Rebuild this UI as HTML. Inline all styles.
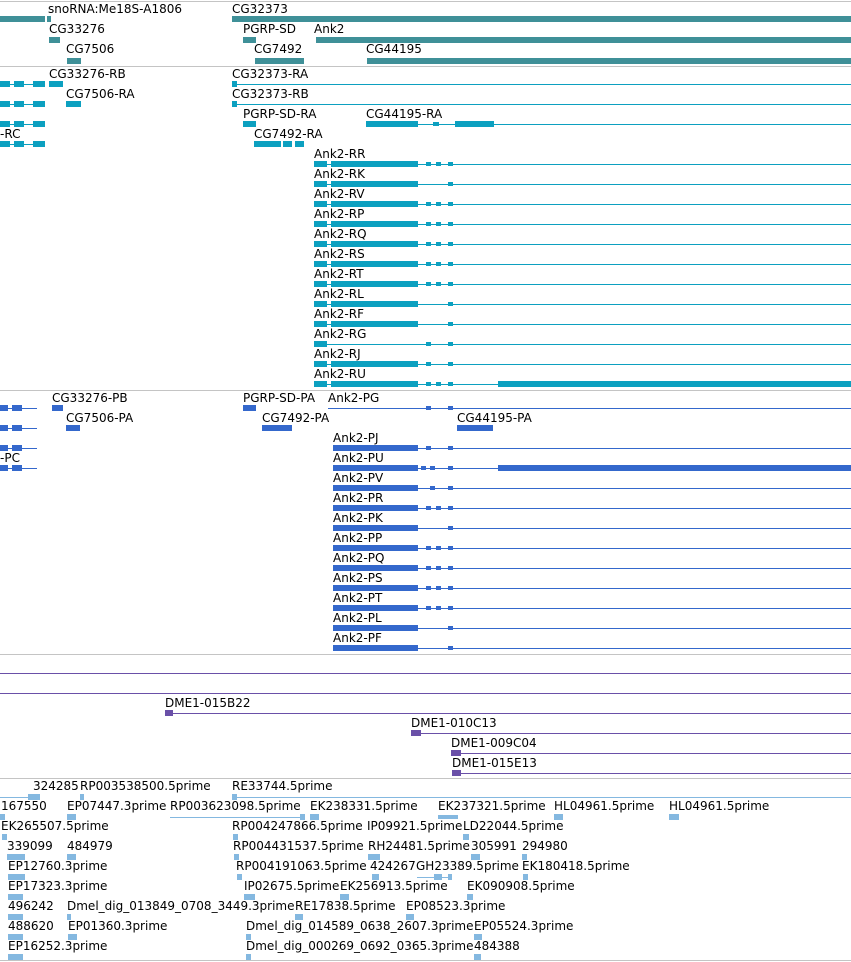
<!DOCTYPE html>
<html><head><meta charset="utf-8"><style>
body{margin:0;width:851px;height:962px;background:#fff;position:relative;overflow:hidden}
.t{position:absolute;font:12px "DejaVu Sans",sans-serif;line-height:14px;white-space:nowrap;color:#000}
.b{position:absolute;height:6px}
.s{position:absolute;height:4px}
.l{position:absolute;height:1px}
.h{position:absolute;left:0;width:851px;height:1px;background:#c4c4c4}
.g{background:#3f9098}.r{background:#0ca0c0}.p{background:#3468cc}.v{background:#6a50a8}.e{background:#84b8e0}
</style></head><body>
<div class="h" style="top:1px"></div>
<div class="h" style="top:66px"></div>
<div class="h" style="top:390px"></div>
<div class="h" style="top:654px"></div>
<div class="h" style="top:778px"></div>
<div class="h" style="top:960px"></div>

<!-- genes -->
<div class="t" style="left:48px;top:2px">snoRNA:Me18S-A1806</div>
<div class="t" style="left:232px;top:2px">CG32373</div>
<div class="b g" style="left:0;top:16px;width:45px"></div>
<div class="b g" style="left:47px;top:16px;width:4px"></div>
<div class="b g" style="left:232px;top:16px;width:619px"></div>
<div class="t" style="left:49px;top:22px">CG33276</div>
<div class="t" style="left:243px;top:22px">PGRP-SD</div>
<div class="t" style="left:314px;top:22px">Ank2</div>
<div class="b g" style="left:49px;top:37px;width:11px"></div>
<div class="b g" style="left:243px;top:37px;width:13px"></div>
<div class="b g" style="left:316px;top:37px;width:535px"></div>
<div class="t" style="left:66px;top:42px">CG7506</div>
<div class="t" style="left:254px;top:42px">CG7492</div>
<div class="t" style="left:366px;top:42px">CG44195</div>
<div class="b g" style="left:67px;top:58px;width:14px"></div>
<div class="b g" style="left:255px;top:58px;width:49px"></div>
<div class="b g" style="left:367px;top:58px;width:484px"></div>

<!-- transcripts -->
<div class="t" style="left:49px;top:67px">CG33276-RB</div>
<div class="t" style="left:232px;top:67px">CG32373-RA</div>
<div class="l r" style="left:0;top:84px;width:45px"></div>
<div class="b r" style="left:0;top:81px;width:10px"></div><div class="b r" style="left:14px;top:81px;width:10px"></div><div class="b r" style="left:33px;top:81px;width:12px"></div>
<div class="b r" style="left:49px;top:81px;width:14px"></div>
<div class="l r" style="left:232px;top:84px;width:619px"></div><div class="b r" style="left:232px;top:81px;width:5px"></div>

<div class="t" style="left:66px;top:87px">CG7506-RA</div>
<div class="t" style="left:232px;top:87px">CG32373-RB</div>
<div class="l r" style="left:0;top:104px;width:45px"></div>
<div class="b r" style="left:0;top:101px;width:10px"></div><div class="b r" style="left:14px;top:101px;width:10px"></div><div class="b r" style="left:33px;top:101px;width:12px"></div>
<div class="b r" style="left:66px;top:101px;width:15px"></div>
<div class="l r" style="left:232px;top:104px;width:619px"></div><div class="b r" style="left:232px;top:101px;width:5px"></div>

<div class="t" style="left:243px;top:107px">PGRP-SD-RA</div>
<div class="t" style="left:366px;top:107px">CG44195-RA</div>
<div class="l r" style="left:0;top:124px;width:45px"></div>
<div class="b r" style="left:0;top:121px;width:10px"></div><div class="b r" style="left:14px;top:121px;width:10px"></div><div class="b r" style="left:33px;top:121px;width:12px"></div>
<div class="b r" style="left:243px;top:121px;width:13px"></div>
<div class="b r" style="left:366px;top:121px;width:52px"></div>
<div class="l r" style="left:418px;top:124px;width:433px"></div>
<div class="s r" style="left:433px;top:122px;width:6px"></div>
<div class="b r" style="left:455px;top:121px;width:39px"></div>

<div class="t" style="left:0;top:127px">-RC</div>
<div class="t" style="left:254px;top:127px">CG7492-RA</div>
<div class="l r" style="left:0;top:144px;width:45px"></div>
<div class="b r" style="left:0;top:141px;width:10px"></div><div class="b r" style="left:14px;top:141px;width:10px"></div><div class="b r" style="left:33px;top:141px;width:12px"></div>
<div class="b r" style="left:254px;top:141px;width:27px"></div><div class="b r" style="left:283px;top:141px;width:9px"></div><div class="b r" style="left:295px;top:141px;width:9px"></div>

<div class="t" style="left:314px;top:147px">Ank2-RR</div>
<div class="t" style="left:314px;top:167px">Ank2-RK</div>
<div class="t" style="left:314px;top:187px">Ank2-RV</div>
<div class="t" style="left:314px;top:207px">Ank2-RP</div>
<div class="t" style="left:314px;top:227px">Ank2-RQ</div>
<div class="t" style="left:314px;top:247px">Ank2-RS</div>
<div class="t" style="left:314px;top:267px">Ank2-RT</div>
<div class="t" style="left:314px;top:287px">Ank2-RL</div>
<div class="t" style="left:314px;top:307px">Ank2-RF</div>
<div class="t" style="left:314px;top:327px">Ank2-RG</div>
<div class="t" style="left:314px;top:347px">Ank2-RJ</div>
<div class="t" style="left:314px;top:367px">Ank2-RU</div>

<div class="l r" style="left:314px;top:164px;width:537px"></div><div class="b r" style="left:314px;top:161px;width:13px"></div><div class="b r" style="left:331px;top:161px;width:87px"></div><div class="s r" style="left:426px;top:162px;width:5px"></div><div class="s r" style="left:436px;top:162px;width:5px"></div><div class="s r" style="left:448px;top:162px;width:5px"></div>
<div class="l r" style="left:314px;top:184px;width:537px"></div><div class="b r" style="left:314px;top:181px;width:13px"></div><div class="b r" style="left:331px;top:181px;width:87px"></div><div class="s r" style="left:448px;top:182px;width:5px"></div>
<div class="l r" style="left:314px;top:204px;width:537px"></div><div class="b r" style="left:314px;top:201px;width:13px"></div><div class="b r" style="left:331px;top:201px;width:87px"></div><div class="s r" style="left:426px;top:202px;width:5px"></div><div class="s r" style="left:436px;top:202px;width:5px"></div><div class="s r" style="left:448px;top:202px;width:5px"></div>
<div class="l r" style="left:314px;top:224px;width:537px"></div><div class="b r" style="left:314px;top:221px;width:13px"></div><div class="b r" style="left:331px;top:221px;width:87px"></div><div class="s r" style="left:426px;top:222px;width:5px"></div><div class="s r" style="left:436px;top:222px;width:5px"></div><div class="s r" style="left:448px;top:222px;width:5px"></div>
<div class="l r" style="left:314px;top:244px;width:537px"></div><div class="b r" style="left:314px;top:241px;width:13px"></div><div class="b r" style="left:331px;top:241px;width:87px"></div><div class="s r" style="left:426px;top:242px;width:5px"></div><div class="s r" style="left:436px;top:242px;width:5px"></div><div class="s r" style="left:448px;top:242px;width:5px"></div>
<div class="l r" style="left:314px;top:264px;width:537px"></div><div class="b r" style="left:314px;top:261px;width:13px"></div><div class="b r" style="left:331px;top:261px;width:87px"></div><div class="s r" style="left:426px;top:262px;width:5px"></div><div class="s r" style="left:436px;top:262px;width:5px"></div><div class="s r" style="left:448px;top:262px;width:5px"></div>
<div class="l r" style="left:314px;top:284px;width:537px"></div><div class="b r" style="left:314px;top:281px;width:13px"></div><div class="b r" style="left:331px;top:281px;width:87px"></div><div class="s r" style="left:426px;top:282px;width:5px"></div><div class="s r" style="left:436px;top:282px;width:5px"></div><div class="s r" style="left:448px;top:282px;width:5px"></div>
<div class="l r" style="left:314px;top:304px;width:537px"></div><div class="b r" style="left:314px;top:301px;width:13px"></div><div class="b r" style="left:331px;top:301px;width:87px"></div><div class="s r" style="left:448px;top:302px;width:5px"></div>
<div class="l r" style="left:314px;top:324px;width:537px"></div><div class="b r" style="left:314px;top:321px;width:13px"></div><div class="b r" style="left:331px;top:321px;width:87px"></div><div class="s r" style="left:448px;top:322px;width:5px"></div>
<div class="l r" style="left:314px;top:344px;width:537px"></div><div class="b r" style="left:314px;top:341px;width:13px"></div><div class="s r" style="left:426px;top:342px;width:5px"></div><div class="s r" style="left:448px;top:342px;width:5px"></div>
<div class="l r" style="left:314px;top:364px;width:537px"></div><div class="b r" style="left:314px;top:361px;width:13px"></div><div class="b r" style="left:331px;top:361px;width:87px"></div><div class="s r" style="left:426px;top:362px;width:5px"></div><div class="s r" style="left:448px;top:362px;width:5px"></div>
<div class="l r" style="left:314px;top:384px;width:537px"></div><div class="b r" style="left:314px;top:381px;width:13px"></div><div class="b r" style="left:331px;top:381px;width:87px"></div><div class="s r" style="left:426px;top:382px;width:5px"></div><div class="s r" style="left:436px;top:382px;width:5px"></div><div class="s r" style="left:448px;top:382px;width:5px"></div><div class="b r" style="left:498px;top:381px;width:353px"></div>

<!-- proteins -->
<div class="t" style="left:52px;top:391px">CG33276-PB</div>
<div class="t" style="left:243px;top:391px">PGRP-SD-PA</div>
<div class="t" style="left:328px;top:391px">Ank2-PG</div>
<div class="l p" style="left:0;top:408px;width:37px"></div>
<div class="b p" style="left:0;top:405px;width:8px"></div><div class="b p" style="left:12px;top:405px;width:10px"></div>
<div class="b p" style="left:52px;top:405px;width:11px"></div>
<div class="b p" style="left:243px;top:405px;width:13px"></div>
<div class="l p" style="left:328px;top:408px;width:523px"></div><div class="s p" style="left:426px;top:406px;width:5px"></div><div class="s p" style="left:448px;top:406px;width:5px"></div>

<div class="t" style="left:66px;top:411px">CG7506-PA</div>
<div class="t" style="left:262px;top:411px">CG7492-PA</div>
<div class="t" style="left:457px;top:411px">CG44195-PA</div>
<div class="l p" style="left:0;top:428px;width:37px"></div>
<div class="b p" style="left:0;top:425px;width:8px"></div><div class="b p" style="left:12px;top:425px;width:10px"></div>
<div class="b p" style="left:66px;top:425px;width:14px"></div>
<div class="b p" style="left:262px;top:425px;width:30px"></div>
<div class="b p" style="left:457px;top:425px;width:36px"></div>

<div class="t" style="left:333px;top:431px">Ank2-PJ</div>
<div class="t" style="left:0;top:451px">-PC</div>
<div class="l p" style="left:0;top:448px;width:37px"></div>
<div class="b p" style="left:0;top:445px;width:8px"></div><div class="b p" style="left:12px;top:445px;width:10px"></div>
<div class="l p" style="left:0;top:468px;width:37px"></div>
<div class="b p" style="left:0;top:465px;width:8px"></div><div class="b p" style="left:12px;top:465px;width:10px"></div>

<div class="t" style="left:333px;top:451px">Ank2-PU</div>
<div class="t" style="left:333px;top:471px">Ank2-PV</div>
<div class="t" style="left:333px;top:491px">Ank2-PR</div>
<div class="t" style="left:333px;top:511px">Ank2-PK</div>
<div class="t" style="left:333px;top:531px">Ank2-PP</div>
<div class="t" style="left:333px;top:551px">Ank2-PQ</div>
<div class="t" style="left:333px;top:571px">Ank2-PS</div>
<div class="t" style="left:333px;top:591px">Ank2-PT</div>
<div class="t" style="left:333px;top:611px">Ank2-PL</div>
<div class="t" style="left:333px;top:631px">Ank2-PF</div>

<div class="l p" style="left:333px;top:448px;width:518px"></div><div class="b p" style="left:333px;top:445px;width:85px"></div><div class="s p" style="left:426px;top:446px;width:5px"></div><div class="s p" style="left:448px;top:446px;width:5px"></div>
<div class="l p" style="left:333px;top:468px;width:518px"></div><div class="b p" style="left:333px;top:465px;width:85px"></div><div class="s p" style="left:421px;top:466px;width:5px"></div><div class="s p" style="left:430px;top:466px;width:5px"></div><div class="s p" style="left:448px;top:466px;width:5px"></div><div class="b p" style="left:498px;top:465px;width:353px"></div>
<div class="l p" style="left:333px;top:488px;width:518px"></div><div class="b p" style="left:333px;top:485px;width:85px"></div><div class="s p" style="left:430px;top:486px;width:5px"></div><div class="s p" style="left:448px;top:486px;width:5px"></div>
<div class="l p" style="left:333px;top:508px;width:518px"></div><div class="b p" style="left:333px;top:505px;width:85px"></div><div class="s p" style="left:426px;top:506px;width:5px"></div><div class="s p" style="left:436px;top:506px;width:5px"></div><div class="s p" style="left:448px;top:506px;width:5px"></div>
<div class="l p" style="left:333px;top:528px;width:518px"></div><div class="b p" style="left:333px;top:525px;width:85px"></div><div class="s p" style="left:448px;top:526px;width:5px"></div>
<div class="l p" style="left:333px;top:548px;width:518px"></div><div class="b p" style="left:333px;top:545px;width:85px"></div><div class="s p" style="left:426px;top:546px;width:5px"></div><div class="s p" style="left:436px;top:546px;width:5px"></div><div class="s p" style="left:448px;top:546px;width:5px"></div>
<div class="l p" style="left:333px;top:568px;width:518px"></div><div class="b p" style="left:333px;top:565px;width:85px"></div><div class="s p" style="left:426px;top:566px;width:5px"></div><div class="s p" style="left:436px;top:566px;width:5px"></div><div class="s p" style="left:448px;top:566px;width:5px"></div>
<div class="l p" style="left:333px;top:588px;width:518px"></div><div class="b p" style="left:333px;top:585px;width:85px"></div><div class="s p" style="left:426px;top:586px;width:5px"></div><div class="s p" style="left:436px;top:586px;width:5px"></div><div class="s p" style="left:448px;top:586px;width:5px"></div>
<div class="l p" style="left:333px;top:608px;width:518px"></div><div class="b p" style="left:333px;top:605px;width:85px"></div><div class="s p" style="left:426px;top:606px;width:5px"></div><div class="s p" style="left:436px;top:606px;width:5px"></div><div class="s p" style="left:448px;top:606px;width:5px"></div>
<div class="l p" style="left:333px;top:628px;width:518px"></div><div class="b p" style="left:333px;top:625px;width:85px"></div><div class="s p" style="left:448px;top:626px;width:5px"></div>
<div class="l p" style="left:333px;top:648px;width:518px"></div><div class="b p" style="left:333px;top:645px;width:85px"></div><div class="s p" style="left:448px;top:646px;width:5px"></div>

<!-- clones -->
<div class="l v" style="left:0;top:673px;width:851px"></div>
<div class="l v" style="left:0;top:693px;width:851px"></div>
<div class="t" style="left:165px;top:696px">DME1-015B22</div>
<div class="l v" style="left:165px;top:713px;width:686px"></div><div class="b v" style="left:165px;top:710px;width:8px"></div>
<div class="t" style="left:411px;top:716px">DME1-010C13</div>
<div class="l v" style="left:411px;top:733px;width:440px"></div><div class="b v" style="left:411px;top:730px;width:10px"></div>
<div class="t" style="left:451px;top:736px">DME1-009C04</div>
<div class="l v" style="left:451px;top:753px;width:400px"></div><div class="b v" style="left:451px;top:750px;width:10px"></div>
<div class="t" style="left:452px;top:756px">DME1-015E13</div>
<div class="l v" style="left:452px;top:773px;width:399px"></div><div class="b v" style="left:452px;top:770px;width:9px"></div>

<!-- ESTs -->
<div class="t" style="left:33px;top:779px">324285</div>
<div class="t" style="left:80px;top:779px">RP003538500.5prime</div>
<div class="t" style="left:232px;top:779px">RE33744.5prime</div>
<div class="l e" style="left:0;top:797px;width:40px"></div><div class="b e" style="left:28px;top:794px;width:12px"></div>
<div class="b e" style="left:80px;top:794px;width:4px"></div>
<div class="l e" style="left:232px;top:797px;width:619px"></div><div class="b e" style="left:232px;top:794px;width:5px"></div>

<div class="t" style="left:1px;top:799px">167550</div>
<div class="t" style="left:67px;top:799px">EP07447.3prime</div>
<div class="t" style="left:170px;top:799px">RP003623098.5prime</div>
<div class="t" style="left:310px;top:799px">EK238331.5prime</div>
<div class="t" style="left:438px;top:799px">EK237321.5prime</div>
<div class="t" style="left:554px;top:799px">HL04961.5prime</div>
<div class="t" style="left:669px;top:799px">HL04961.5prime</div>
<div class="b e" style="left:0;top:814px;width:5px"></div>
<div class="b e" style="left:67px;top:814px;width:9px"></div>
<div class="l e" style="left:170px;top:817px;width:135px"></div><div class="b e" style="left:300px;top:814px;width:5px"></div>
<div class="b e" style="left:310px;top:814px;width:9px"></div>
<div class="l e" style="left:438px;top:817px;width:20px"></div><div class="s e" style="left:438px;top:815px;width:20px"></div>
<div class="b e" style="left:554px;top:814px;width:9px"></div>
<div class="b e" style="left:669px;top:814px;width:10px"></div>

<div class="t" style="left:1px;top:819px">EK265507.5prime</div>
<div class="t" style="left:232px;top:819px">RP004247866.5prime</div>
<div class="t" style="left:367px;top:819px">IP09921.5prime</div>
<div class="t" style="left:463px;top:819px">LD22044.5prime</div>
<div class="b e" style="left:2px;top:834px;width:5px"></div>
<div class="b e" style="left:233px;top:834px;width:5px"></div>
<div class="b e" style="left:463px;top:834px;width:6px"></div>

<div class="t" style="left:7px;top:839px">339099</div>
<div class="t" style="left:67px;top:839px">484979</div>
<div class="t" style="left:233px;top:839px">RP004431537.5prime</div>
<div class="t" style="left:368px;top:839px">RH24481.5prime</div>
<div class="t" style="left:471px;top:839px">305991</div>
<div class="t" style="left:522px;top:839px">294980</div>
<div class="b e" style="left:7px;top:854px;width:18px"></div>
<div class="b e" style="left:67px;top:854px;width:9px"></div>
<div class="b e" style="left:234px;top:854px;width:5px"></div>
<div class="b e" style="left:368px;top:854px;width:12px"></div>
<div class="b e" style="left:471px;top:854px;width:9px"></div>
<div class="b e" style="left:522px;top:854px;width:5px"></div>

<div class="t" style="left:8px;top:859px">EP12760.3prime</div>
<div class="t" style="left:236px;top:859px">RP004191063.5prime</div>
<div class="t" style="left:370px;top:859px">424267</div>
<div class="t" style="left:416px;top:859px">GH23389.5prime</div>
<div class="t" style="left:522px;top:859px">EK180418.5prime</div>
<div class="b e" style="left:8px;top:874px;width:17px"></div>
<div class="b e" style="left:237px;top:874px;width:5px"></div>
<div class="b e" style="left:372px;top:874px;width:7px"></div>
<div class="l e" style="left:417px;top:877px;width:35px"></div><div class="b e" style="left:434px;top:874px;width:8px"></div><div class="b e" style="left:448px;top:874px;width:4px"></div>
<div class="b e" style="left:523px;top:874px;width:5px"></div>

<div class="t" style="left:8px;top:879px">EP17323.3prime</div>
<div class="t" style="left:244px;top:879px">IP02675.5prime</div>
<div class="t" style="left:340px;top:879px">EK256913.5prime</div>
<div class="t" style="left:467px;top:879px">EK090908.5prime</div>
<div class="b e" style="left:8px;top:894px;width:15px"></div>
<div class="b e" style="left:244px;top:894px;width:11px"></div>
<div class="b e" style="left:340px;top:894px;width:9px"></div>
<div class="b e" style="left:467px;top:894px;width:6px"></div>

<div class="t" style="left:8px;top:899px">496242</div>
<div class="t" style="left:67px;top:899px">Dmel_dig_013849_0708_3449.3prime</div>
<div class="t" style="left:295px;top:899px">RE17838.5prime</div>
<div class="t" style="left:406px;top:899px">EP08523.3prime</div>
<div class="b e" style="left:8px;top:914px;width:15px"></div>
<div class="b e" style="left:67px;top:914px;width:4px"></div>
<div class="b e" style="left:295px;top:914px;width:8px"></div>
<div class="b e" style="left:406px;top:914px;width:8px"></div>

<div class="t" style="left:8px;top:919px">488620</div>
<div class="t" style="left:68px;top:919px">EP01360.3prime</div>
<div class="t" style="left:246px;top:919px">Dmel_dig_014589_0638_2607.3prime</div>
<div class="t" style="left:474px;top:919px">EP05524.3prime</div>
<div class="b e" style="left:8px;top:934px;width:15px"></div>
<div class="b e" style="left:68px;top:934px;width:9px"></div>
<div class="b e" style="left:246px;top:934px;width:5px"></div>
<div class="b e" style="left:474px;top:934px;width:8px"></div>

<div class="t" style="left:8px;top:939px">EP16252.3prime</div>
<div class="t" style="left:246px;top:939px">Dmel_dig_000269_0692_0365.3prime</div>
<div class="t" style="left:474px;top:939px">484388</div>
<div class="b e" style="left:8px;top:954px;width:15px"></div>
<div class="b e" style="left:246px;top:954px;width:5px"></div>
<div class="b e" style="left:474px;top:954px;width:7px"></div>
</body></html>
